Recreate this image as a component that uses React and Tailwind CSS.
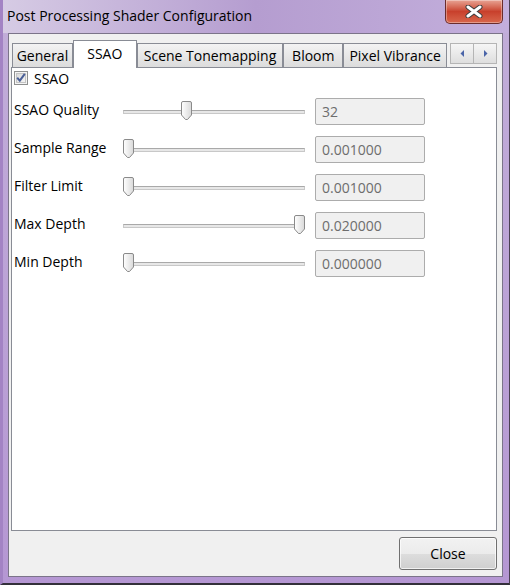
import React from 'react';

const font = { fontFamily: '"Open Sans", "Noto Sans", sans-serif' };

const tabs = [
  { label: 'General', w: 'w-[61px]' },
  { label: 'SSAO', w: 'w-[64px]', active: true },
  { label: 'Scene Tonemapping', w: 'w-[147px]' },
  { label: 'Bloom', w: 'w-[60px]' },
  { label: 'Pixel Vibrance', w: 'w-[104px]' },
];

const rows = [
  { label: 'SSAO Quality', value: '32', pos: 'left-[58px]' },
  { label: 'Sample Range', value: '0.001000', pos: 'left-[0px]' },
  { label: 'Filter Limit', value: '0.001000', pos: 'left-[0px]' },
  { label: 'Max Depth', value: '0.020000', pos: 'left-[171px]' },
  { label: 'Min Depth', value: '0.000000', pos: 'left-[0px]' },
];

const Thumb = () => (
  <svg width="11" height="19" viewBox="0 0 11 19">
    <defs>
      <linearGradient id="thumbg" x1="0" y1="0" x2="1" y2="0">
        <stop offset="0" stopColor="#ffffff" />
        <stop offset="1" stopColor="#d9d9d9" />
      </linearGradient>
    </defs>
    <path
      d="M2 0.5 H9 A1.5 1.5 0 0 1 10.5 2 V14 L6.5 18.5 H4.5 L0.5 14 V2 A1.5 1.5 0 0 1 2 0.5 Z"
      fill="url(#thumbg)"
      stroke="#8a8a8a"
    />
  </svg>
);

const Arrow = ({ dir }) => (
  <svg width="5" height="7" viewBox="0 0 5 7">
    {dir === 'left'
      ? <path d="M4 0 V7 L0.5 3.5 Z" fill="#4a64a8" />
      : <path d="M1 0 V7 L4.5 3.5 Z" fill="#4a64a8" />}
  </svg>
);

const App = () => {
  return (
    <div
      className="w-[510px] h-[585px] flex flex-col bg-gradient-to-b from-[#c2aed9] to-[#b597d3] border-l-[3px] border-l-[#a383c4] border-b-2 border-r border-b-[#33303a] border-r-[#4a4052] overflow-hidden"
      style={font}
    >
      {/* title bar */}
      <div className="h-[33px] flex bg-gradient-to-r from-[#d6cbe4] via-[#b59dd0] to-[#c3afdc]">
        <div className="pl-[4px] pt-[6px] text-[14px] text-black leading-[20px]">
          Post Processing Shader Configuration
        </div>
        <div className="ml-auto mr-[6px] w-[58px] h-[24px] rounded-b-[5px] border border-t-0 border-[#6a2c2c] bg-gradient-to-b from-[#e7a394] via-[#c8402c] to-[#d8664c] flex items-center justify-center shadow-[inset_0_0_0_1px_rgba(255,255,255,0.35)]">
          <svg width="18" height="13" viewBox="0 0 18 13">
            <path d="M3 2 L15 11 M15 2 L3 11" stroke="#3d3d3d" strokeWidth="5" strokeLinecap="round" />
            <path d="M3 2 L15 11 M15 2 L3 11" stroke="#ffffff" strokeWidth="3" strokeLinecap="round" />
          </svg>
        </div>
      </div>

      {/* client area */}
      <div className="flex-1 ml-[5px] mr-[6px] mb-[6px] border border-[#7b7489] bg-[#f0f0f0] flex flex-col pt-[6px] pl-[2px] pr-[5px]">
        {/* tabs */}
        <div className="h-[27px] flex items-end pl-[1px] text-[14px] text-black">
          {tabs.map(t => (
            t.active ? (
              <div
                key={t.label}
                className={`${t.w} h-[28px] mb-[-1px] relative z-10 bg-white border border-b-0 border-[#898c95] flex items-start justify-center pt-[3px] leading-[20px]`}
              >
                {t.label}
              </div>
            ) : (
              <div
                key={t.label}
                className={`${t.w} h-[24px] bg-gradient-to-b from-[#f3f3f3] to-[#dcdcdc] border border-b-0 border-[#898c95] flex items-center justify-center leading-[20px]`}
              >
                {t.label}
              </div>
            )
          ))}
          <div className="ml-[3px] self-start mt-[3px] flex">
            <div className="w-[24px] h-[21px] border border-[#b5b5b5] bg-gradient-to-b from-[#f6f6f6] to-[#dedede] flex items-center justify-center">
              <Arrow dir="left" />
            </div>
            <div className="w-[23px] h-[21px] border border-l-0 border-[#b5b5b5] bg-gradient-to-b from-[#f6f6f6] to-[#dedede] flex items-center justify-center">
              <Arrow dir="right" />
            </div>
          </div>
        </div>

        {/* pane */}
        <div className="h-[464px] bg-white border border-[#898c95] flex flex-col text-[14px] text-black">
          <div className="h-[30px] flex items-start pl-[2px] pt-[3px]">
            <svg width="14" height="14" viewBox="0 0 14 14">
              <defs>
                <linearGradient id="cbg" x1="0" y1="0" x2="1" y2="1">
                  <stop offset="0" stopColor="#d8d8d8" />
                  <stop offset="1" stopColor="#f6f6f6" />
                </linearGradient>
              </defs>
              <rect x="0.5" y="0.5" width="13" height="13" fill="#f4f4f4" stroke="#8e8f8f" />
              <rect x="2.5" y="2.5" width="9" height="9" fill="url(#cbg)" stroke="#c4c4c4" />
              <path d="M3.2 6.8 L5.8 9.6 L10.8 2.8" fill="none" stroke="#4a5f97" strokeWidth="2" />
            </svg>
            <span className="ml-[6px] leading-[16px]">SSAO</span>
          </div>

          {rows.map(r => (
            <div key={r.label} className="h-[38px] flex items-start pl-[2px]">
              <div className="w-[109px] h-[24px] flex items-center leading-[20px]">{r.label}</div>
              <div className="w-[182px] h-[27px] relative flex items-center">
                <div className="w-full h-[4px] border border-[#c8c8c8] border-t-[#a9a9a9] bg-[#e7e7e7]" />
                <div className={`absolute top-[3px] ${r.pos}`}>
                  <Thumb />
                </div>
              </div>
              <div className="ml-[10px] w-[110px] h-[27px] border border-[#acacac] rounded-[2px] bg-[#f0f0f0] text-[#6d6d6d] flex items-center pl-[6px] leading-[20px]">
                {r.value}
              </div>
            </div>
          ))}
        </div>

        {/* footer */}
        <div className="h-[45px] flex items-center justify-end">
          <button className="w-[98px] h-[33px] rounded-[3px] border border-[#707070] bg-[linear-gradient(to_bottom,#f2f2f2_0%,#ebebeb_50%,#dddddd_51%,#cfcfcf_100%)] text-[14px] text-black leading-[20px] shadow-[inset_0_0_0_1px_rgba(255,255,255,0.7)]">
            Close
          </button>
        </div>
      </div>
    </div>
  );
};

export default App;
